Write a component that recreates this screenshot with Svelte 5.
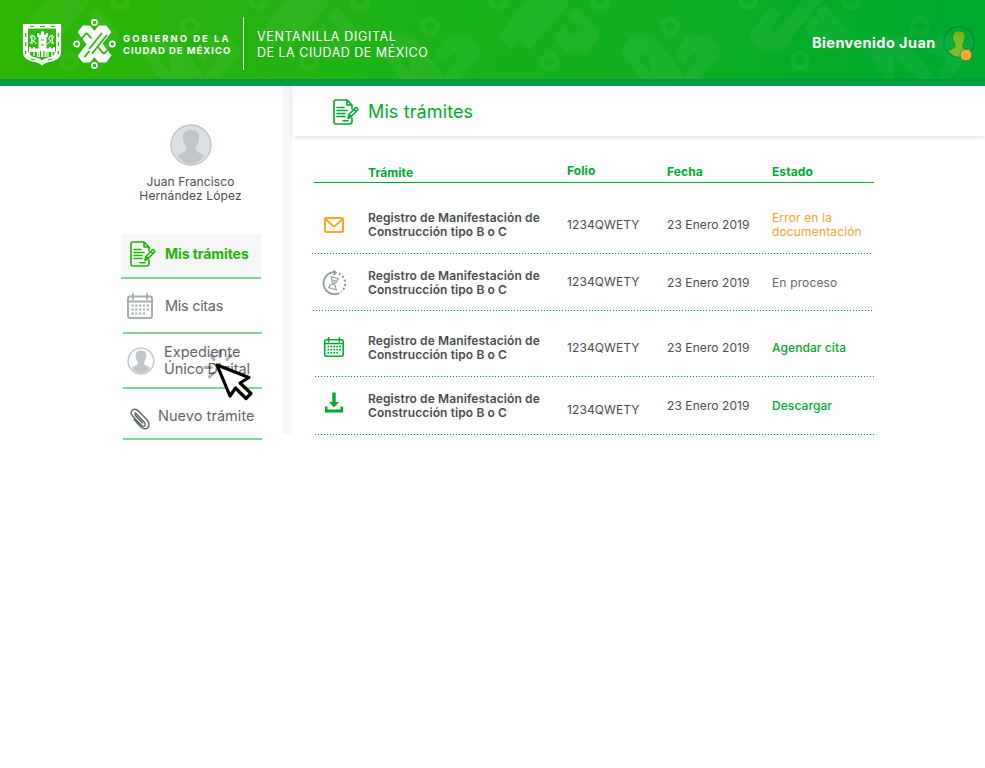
<script>
  const rows = [
    { id: 'r1', icon: 'mail', folio: '1234QWETY', fecha: '23 Enero 2019', estado: ['Error en la', 'documentación'], tone: 'orange' },
    { id: 'r2', icon: 'clock', folio: '1234QWETY', fecha: '23 Enero 2019', estado: ['En proceso'], tone: 'gray' },
    { id: 'r3', icon: 'calendar', folio: '1234QWETY', fecha: '23 Enero 2019', estado: ['Agendar cita'], tone: 'green' },
    { id: 'r4', icon: 'download', folio: '1234QWETY', fecha: '23 Enero 2019', estado: ['Descargar'], tone: 'green' }
  ];
  const tiles = [-480, -240, 0];
</script>

{#snippet formIcon()}
  <svg width="26" height="26" viewBox="0 0 26 26" fill="none" stroke="currentColor" stroke-width="1.600" stroke-linecap="round" stroke-linejoin="round">
    <path d="M19 19V22.500Q19 25 16.500 25H3Q1 25 1 23V3Q1 1 3 1H14L19 6V10M14 1V6H19" />
    <path d="M4 8.500H11M4 11.500H14M4 14.500H12M4 17.500H12M10 21.700H15" />
    <path d="M15 19.500L16 15.500L22.800 8.500Q24.200 8.200 25 10.500L18 17.800ZM16.200 15.600L18 17.500M21 10.500L23 12.500" />
  </svg>
{/snippet}

{#snippet calendarIcon(size)}
  <svg width={size} height={size} viewBox="0 0 26 26" fill="none" stroke="currentColor" stroke-width="2" stroke-linecap="round">
    <rect x="1" y="3.500" width="24" height="21.500" rx="2" />
    <path d="M1 8.500H25M6 1V6M20 1V6" />
    <path d="M4.500 12.500H22M4.500 16.500H22M4.500 20.500H19" stroke-dasharray="2.200 1.600" stroke-linecap="butt" />
  </svg>
{/snippet}

{#snippet bust()}
  <path d="M20 5.800c-5 0-8.300 2.800-8 7.700.1 4 1.200 6.500 2.700 8.500.5 2.500.9 4.200-.3 5.200-2.500 1.800-6.100 2.700-8.100 4.800C10 36.500 14.500 39.500 20 39.500s10-3 13.700-7.500c-2-2.100-5.600-3-8.100-4.800-1.200-1-.8-2.700-.3-5.200 1.500-2 2.600-4.500 2.700-8.500.3-4.900-3-7.700-8-7.700Z" />
{/snippet}

<header>
  <svg class="decor" width="985" height="79" viewBox="0 0 985 79" aria-hidden="true">
    {#each tiles as t}
      <g transform={`translate(${t} 0)`}>
        <g fill="none" stroke="#fff" stroke-width="5">
          <circle cx="600" cy="1" r="7.500" /><circle cx="670" cy="26.500" r="7.500" />
          <circle cx="549" cy="61.500" r="7.500" /><circle cx={t ? 738 : 748} cy="0" r="7.500" />
        </g>
        <g fill="#fff">
          <path d="M620 52L631 36H653L687 79H649L651 70L649 55Q644 51 640 57V60L655 79H641Z" />
          <path d="M675 52L687 36H709L721 52L700 79H683L698 58Q699 53 693 53L683 63Z" />
          <path d="M554 36L563 24L570 33Q576 36 578 29L568 16L577 6L600 35L588 52H564Z" />
          <path d="M548 0H571L530 50L518 38L510 52H513L499 36L526 0Z" />
        </g>
      </g>
    {/each}
    <g transform="translate(480 0)">
      <g fill="none" stroke="#fff" stroke-width="5"><circle cx="440" cy="25.500" r="7.500" /><circle cx="371" cy="0" r="7.500" /><circle cx="320" cy="60.500" r="7.500" /></g>
      <path fill="#fff" d="M269 35L292 5L301 14L290 28Q291 35 298 32L322 0H342L312 37L301 51H282ZM324 28L335 16L345 30L337 12L345 4L370 36L358 51H345ZM390 52L402 36H424L456 79H438L413 54V79H405ZM447 52L458 36H480L492 52L470 79H455L467 58Z" />
    </g>
  </svg>
  <svg class="shield" width="40" height="44" viewBox="0 0 40 44" fill="none" stroke="#fff">
    <path d="M1.500 1.500H38.500V29Q38.500 36.500 27 38.500Q22 39.500 20 41.800Q18 39.500 13 38.500Q1.500 36.500 1.500 29Z" stroke-width="1.200" fill="#fff" />
    <path d="M6 5.500H34V27Q34 33 26 34.500Q21.500 35.500 20 37.500Q18.500 35.500 14 34.500Q6 33 6 27Z" fill="#2bb508" stroke="none" />
    <g stroke="#2bb508" stroke-width="1.200"><path d="M8 3.500H12M18 3.500H23M29 3.500H33M3.700 10V14M3.700 19V23M3.700 28V31M36.300 10V14M36.300 19V23M36.300 28V31M9 36L13 37M26 37L30 36" /></g>
    <path d="M16.500 34V14H15V10H17V11.500H19V8.500H22V11.500H24V10H26V14H24.500V34ZM7 24H9V25.500H11V24H13V25.500H16.500V29H7ZM24.500 25.500H27V24H29V25.500H31V24H33V29H24.500Z" fill="#fff" stroke="none" />
    <path d="M8.500 21L10 17L8.500 14Q9 11 12 13L13.500 16L11 18L15 21M31.500 21L30 17L31.500 14Q31 11 28 13L26.500 16L29 18L25 21M10 13V21M30 13V21" stroke-width="1" />
    <path d="M7.500 28.500V32M12 28.500V33M15.500 29V34M26 29V34M30 28.500V33M33 28.500V31" stroke-width="1.300" />
    <path d="M19 17H22M19 22H22M18.500 28V34M22 28V34" stroke="#2bb508" stroke-width="1.200" />
  </svg>
  <svg class="mark" width="44" height="50" viewBox="0 0 44 50">
    <g fill="none" stroke="#fff" stroke-width="1.700"><circle cx="21.500" cy="3.400" r="2.600" /><circle cx="21.500" cy="46.500" r="2.600" /><circle cx="3.700" cy="25" r="2.600" /><circle cx="39.300" cy="25" r="2.600" /></g>
    <path fill="#fff" stroke="#fff" stroke-linejoin="round" d="M5 13L10 7H17L21.300 12.500L26 7H33L38 13L29 24.500L38 36.500L33 43H26L21.300 37.500L17 43H10L5 37L14 25.500Z" />
    <g fill="none" stroke="#2bb508" stroke-width="1.900" stroke-linecap="round"><path d="M8 20.500L12 15.500Q13.500 13.500 15 15.500L18 19M28.500 14.500L16.500 29.500M33.500 16.500L19.500 34M16 32.500L12 37.500M25 28L29.500 33.500Q31 35 32.500 33.500L35 30" /></g>
  </svg>
  <div class="gov"><span class="g1">GOBIERNO DE LA</span><span class="g2">CIUDAD DE MÉXICO</span></div>
  <div class="divider"></div>
  <div class="site"><span class="s1">VENTANILLA DIGITAL</span><span class="s2">DE LA CIUDAD DE MÉXICO</span></div>
  <div class="welcome">Bienvenido Juan</div>
  <svg class="user" width="34" height="36" viewBox="0 0 34 36">
    <circle cx="17" cy="17" r="15.300" fill="none" stroke="#008c3c" stroke-width="1.400" />
    <g transform="translate(1.200 1.400) scale(.78)" fill="#75b81c" stroke="#008c3c" stroke-width="1">{@render bust()}</g>
    <circle cx="24" cy="30" r="6" fill="#f9a526" stroke="#11943a" stroke-width="1" />
  </svg>
</header>

<div class="page">
  <aside>
    <svg class="portrait" width="42" height="42" viewBox="0 0 42 42">
      <circle cx="21" cy="21" r="20" fill="#dce0e1" />
      <g transform="translate(1 0)" fill="#c0c6c9">{@render bust()}</g>
      <circle cx="21" cy="21" r="20" fill="none" stroke="#bcc1c4" stroke-width="1.300" />
    </svg>
    <div class="person"><span class="p1">Juan Francisco</span><span class="p2">Hernández López</span></div>
    <nav>
      <a class="item active" href="#tramites">{@render formIcon()}<span class="n1">Mis trámites</span></a>
      <a class="item citas" href="#citas"><span class="ic">{@render calendarIcon(26)}</span><span class="n2">Mis citas</span></a>
      <a class="item exp" href="#expediente">
        <svg width="28" height="28" viewBox="0 0 42 42"><circle cx="21" cy="21" r="19.300" fill="none" stroke="#c0c6c9" stroke-width="2.200" /><g transform="translate(1 -.5)" fill="#c0c6c9">{@render bust()}</g></svg>
        <span class="two"><span class="n3">Expediente</span><span class="n4">Único Digital</span></span>
        <svg class="cursor" width="54" height="54" viewBox="0 0 54 54">
          <g stroke="#000" stroke-opacity=".32" stroke-width="3" stroke-linecap="round"><path d="M2 19.500H8M6.500 29L10.500 25M8 7.500L11 11.500M17 3V8.500M28 7.500L24 11.500" /></g>
          <path d="M14 17L46 29.500L37 35L48 45.500L43 50.500L32.500 40L27 48Z" fill="#fff" stroke="#000" stroke-width="3.200" stroke-linejoin="round" />
        </svg>
      </a>
      <a class="item nuevo" href="#nuevo">
        <svg width="20" height="22" viewBox="0 0 20 22" fill="none" stroke="#5d6767" stroke-width="1.400" stroke-linecap="round"><path d="M5.500 5L14.500 14.500Q16 17 14.500 18Q13 19 11.500 17.500L2.500 8Q-.5 4.500 2.500 2Q5.500 0 8.500 3L17.500 12.500Q20.500 17 17.500 20Q14.500 22 11 19L4 11.500M5.500 5Q4.500 6 5.500 7.500L12.500 15" /></svg>
        <span class="n5">Nuevo trámite</span>
      </a>
    </nav>
  </aside>
  <div class="rail"></div>
  <main>
    <div class="title">{@render formIcon()}<h1>Mis trámites</h1></div>
    <div class="table">
      <div class="row head"><span></span><b class="c1">Trámite</b><b class="c2">Folio</b><b class="c3">Fecha</b><b class="c4">Estado</b></div>
      {#each rows as r}
        <div class={`row ${r.id}`}>
          <span class="icon">
            {#if r.icon === 'mail'}
              <svg width="20" height="16" viewBox="0 0 20 16" fill="none" stroke="#f9a526" stroke-width="2"><rect x="1" y="1" width="18" height="14" rx="1.500" /><path d="M2 2.500L8.500 8.500Q10 9.700 11.500 8.500L18 2.500" /></svg>
            {:else if r.icon === 'clock'}
              <svg width="26" height="26" viewBox="0 0 26 26" fill="none" stroke="#8e9b9e" stroke-width="1.700"><path d="M14 2.200A11 11 0 1 0 18.500 23M12.500 .5L15 2.500L12.500 5" /><path d="M18 3.500A11 11 0 0 1 20 22" stroke-width="2" stroke-dasharray="2 2.200" /><path d="M9.500 6.500L18 9M7 17.500L16 20M10.500 7L10.800 11.500L12.800 13.500L9 15L8 17.500M17 9L15.500 12L12.800 13.500L14.500 16.500L15 19.500M11.500 10L15 11" stroke-width="1.100" /></svg>
            {:else if r.icon === 'calendar'}
              {@render calendarIcon(20)}
            {:else}
              <svg width="20" height="21" viewBox="0 0 20 21" fill="#00a92f"><path d="M8.300 .5H11.700V10H15L10 15.500L5 10H8.300ZM1 14.500H3.500V17.500H16.500V14.500H19V20.500H1Z" /></svg>
            {/if}
          </span>
          <span class="name"><span class="t1">Registro de Manifestación de</span><span class="t2">Construcción tipo B o C</span></span>
          <span class="folio">{r.folio}</span>
          <span class="fecha">{r.fecha}</span>
          <span class={`estado ${r.tone}`}>{#each r.estado as line}<span>{line}</span>{/each}</span>
        </div>
      {/each}
    </div>
  </main>
</div>

<style>
  :global(body) { margin: 0; background: #fff; }
  :global(#app) { font-family: "Inter", "Open Sans", sans-serif; }
  header { position: relative; box-sizing: border-box; height: 85px; margin-bottom: 1px; display: flex; align-items: flex-start; color: #fff;
    background: linear-gradient(100deg, #2db605 0%, #17b01b 55%, #00a92f 95%); border-bottom: 6px solid #009a44; box-shadow: 0 1px 0 #1aa82c; white-space: nowrap; }
  .decor { position: absolute; left: 0; top: 0; opacity: .045; }
  .shield { margin: 23px 0 0 22px; }
  .mark { margin: 19px 0 0 11px; }
  .gov { margin: 33px 0 0 6px; width: 108px; display: flex; flex-direction: column; font-size: 9.500px; line-height: 12px; font-weight: 700; }
  .g1 { letter-spacing: 2px; }
  .g2 { letter-spacing: .96px; }
  .divider { width: 1px; height: 53px; margin: 17px 0 0 12px; background: #e9f8e5; }
  .site { margin: 29px 0 0 13px; display: flex; flex-direction: column; font-size: 12.500px; line-height: 16px; }
  .s1 { letter-spacing: .64px; }
  .s2 { letter-spacing: .5px; }
  .welcome { margin: 34px 0 0 auto; width: 123px; font-size: 14.500px; line-height: 18px; font-weight: 700; letter-spacing: .42px; }
  .user { margin: 25px 9px 0 7px; }

  .page { display: flex; align-items: flex-start; }
  aside { width: 162px; padding: 38px 0 0 121px; box-sizing: content-box; }
  .portrait { display: block; margin-left: 49px; }
  .person { width: 139px; margin-top: 9px; display: flex; flex-direction: column; align-items: center; font-size: 12px; line-height: 14px; color: #454d4d; white-space: nowrap; letter-spacing: .12px; }
  nav { margin-top: 31px; width: 141px; }
  .item { position: relative; display: flex; align-items: center; box-sizing: border-box; margin-left: 2px; border-bottom: 2px solid #80d495; color: #5d6767; font-size: 14.500px; text-decoration: none; white-space: nowrap; }
  .active { margin: 0 1px 0 0; height: 45px; padding: 0 0 4px 9px; gap: 9px; background: #f6f8f7; color: #1eb400; font-size: 14px; font-weight: 700; letter-spacing: -.07px; }
  .citas { height: 55px; padding-left: 4px; gap: 12px; }
  .n2 { letter-spacing: -.3px; }
  .n4 { letter-spacing: -.06px; }
  .ic { display: flex; color: #a4afad; }
  .exp { height: 55px; padding-left: 4px; gap: 9px; }
  .two { display: flex; flex-direction: column; line-height: 17px; margin-top: -1px; }
  .cursor { position: absolute; left: 80px; top: 14px; }
  .nuevo { height: 51px; padding: 3px 0 0 7px; gap: 8px; }
  .nuevo svg { margin-top: 7px; }
  .n5 { letter-spacing: .05px; }
  .rail { width: 9px; height: 348px; background: #f6f8f7; }
  main { width: 692px; margin-left: 1px; }
  .title { height: 50px; display: flex; align-items: center; gap: 9px; padding: 1px 0 0 40px; box-sizing: border-box; color: #00a92f; background: #fff; box-shadow: 0 2px 5px rgba(0, 0, 0, .1); }
  h1 { margin: 0; font-size: 18px; line-height: 24px; font-weight: 400; letter-spacing: .12px; padding-top: 1px; }

  .table { width: 561px; margin-left: 20px; font-size: 12px; line-height: 14px; color: #484c4c; white-space: nowrap; }
  .row { display: grid; grid-template-columns: 55px 199px 100px 105px 101px; align-items: center; box-sizing: border-box; }
  .head { height: 47px; padding-top: 27px; color: #00a92f; border-bottom: 1px solid #00a92f; margin-left: 1px; grid-template-columns: 54px 199px 100px 105px 101px; letter-spacing: .08px; }
  .head .c2 { margin-top: -4px; }
  .head .c3, .head .c4 { margin-top: -2px; }
  .name, .estado { display: flex; flex-direction: column; }
  .name { font-weight: 600; letter-spacing: .11px; }
  .folio { letter-spacing: .1px; }
  .fecha { letter-spacing: .08px; }
  .estado { letter-spacing: .15px; }
  .icon { display: flex; width: 42px; justify-content: center; color: #00a92f; }
  .r1, .r2, .r3, .r4 { background: repeating-linear-gradient(90deg, #00a03a 0 1px, transparent 1px 3px) left bottom / 100% 1px no-repeat; }
  .r1 { height: 71px; padding-top: 13px; margin: 0 3px 0 -1px; padding-left: 1px; }
  .r1 > .icon { padding-bottom: 1px; }
  .r2 { height: 57px; margin-right: 2px; }
  .r2 > .folio { padding-bottom: 2px; }
  .r3 { height: 66px; padding-top: 7px; margin-left: 2px; }
  .r3 > .icon { padding-bottom: 2px; }
  .r4 { height: 58px; margin-left: 2px; }
  .r3, .r4 { grid-template-columns: 53px 199px 100px 105px 101px; }
  .r3 > .icon, .r4 > .icon { width: 38px; }
  .r4 > .folio { padding-top: 8px; }
  .r4 > .icon { padding-bottom: 8px; }
  .orange { color: #f5a42c; }
  .gray { color: #626b6b; }
  .green { color: #00a92f; font-weight: 500; letter-spacing: .08px; }
</style>
